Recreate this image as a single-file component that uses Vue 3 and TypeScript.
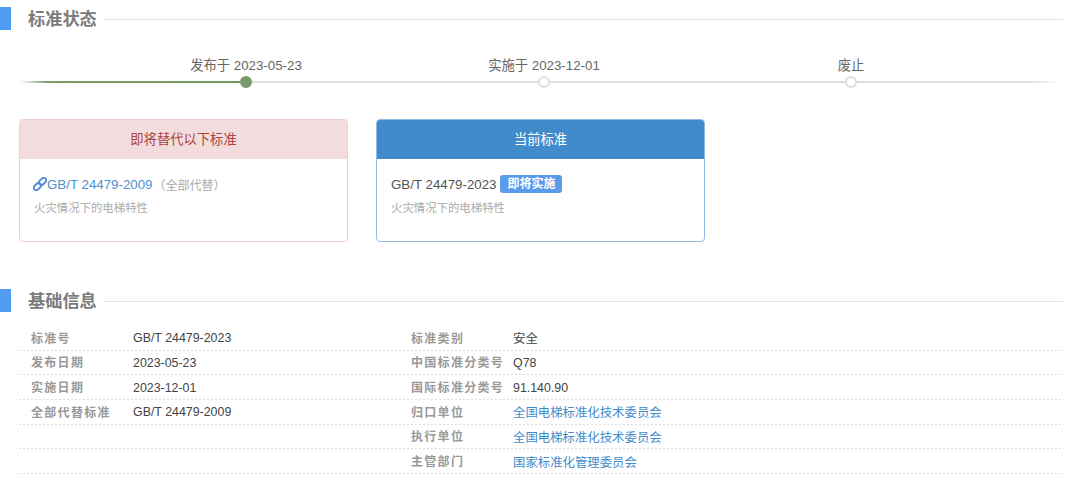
<script setup lang="ts">
interface Row { label: string; value: string; link?: boolean }
const leftRows: Row[] = [
  { label: '标准号', value: 'GB/T 24479-2023' },
  { label: '发布日期', value: '2023-05-23' },
  { label: '实施日期', value: '2023-12-01' },
  { label: '全部代替标准', value: 'GB/T 24479-2009' },
  { label: '', value: '' },
  { label: '', value: '' },
]
const rightRows: Row[] = [
  { label: '标准类别', value: '安全' },
  { label: '中国标准分类号', value: 'Q78' },
  { label: '国际标准分类号', value: '91.140.90' },
  { label: '归口单位', value: '全国电梯标准化技术委员会', link: true },
  { label: '执行单位', value: '全国电梯标准化技术委员会', link: true },
  { label: '主管部门', value: '国家标准化管理委员会', link: true },
]
</script>

<template>
  <div class="page">
    <section class="status">
      <header class="head">
        <i class="mark"></i>
        <h2>标准状态</h2>
        <span class="rule"></span>
      </header>

      <div class="timeline">
        <div class="labels">
          <span class="tl a">发布于 2023-05-23</span>
          <span class="tl b">实施于 2023-12-01</span>
          <span class="tl c">废止</span>
        </div>
        <div class="track">
          <span class="seg green s1"></span>
          <span class="dot on"></span>
          <span class="seg s2"></span>
          <span class="dot"></span>
          <span class="seg s3"></span>
          <span class="dot"></span>
          <span class="seg s4"></span>
        </div>
      </div>

      <div class="cards">
        <article class="card red">
          <div class="card-title">即将替代以下标准</div>
          <div class="card-body">
            <div class="line">
              <svg class="chain" viewBox="0 0 14 14" width="14" height="14" fill="none" stroke="#4f8fd0" stroke-width="1.9">
                <rect x="5.6" y="1.9" width="8" height="5" rx="2.5" transform="rotate(-45 9.6 4.4)" />
                <rect x="0.4" y="7.1" width="8" height="5" rx="2.5" transform="rotate(-45 4.4 9.6)" />
              </svg>
              <a class="std">GB/T 24479-2009</a>
              <span class="note">（全部代替）</span>
            </div>
            <p class="desc">火灾情况下的电梯特性</p>
          </div>
        </article>

        <article class="card blue">
          <div class="card-title">当前标准</div>
          <div class="card-body">
            <div class="line">
              <span class="cur">GB/T 24479-2023</span>
              <span class="badge">即将实施</span>
            </div>
            <p class="desc">火灾情况下的电梯特性</p>
          </div>
        </article>
      </div>
    </section>

    <section class="basic">
      <header class="head">
        <i class="mark"></i>
        <h2>基础信息</h2>
        <span class="rule"></span>
      </header>

      <div class="table">
        <div class="col left">
          <div v-for="(r, i) in leftRows" :key="i" class="row">
            <span class="k">{{ r.label }}</span>
            <span class="v">{{ r.value }}</span>
          </div>
        </div>
        <div class="col right">
          <div v-for="(r, i) in rightRows" :key="i" class="row">
            <span class="k">{{ r.label }}</span>
            <span class="v" :class="{ link: r.link }">{{ r.value }}</span>
          </div>
        </div>
      </div>
    </section>
  </div>
</template>

<style>
html, body { margin: 0; background: #fff; }
</style>

<style scoped>
.page {
  width: 1080px;
  height: 495px;
  overflow: hidden;
  box-sizing: border-box;
  padding-top: 7px;
  background: #fff;
  font-family: "Liberation Sans", "Noto Sans CJK SC", sans-serif;
  font-size: 13.3px;
  color: #555;
}
.head {
  display: flex;
  align-items: center;
  height: 23px;
  padding-right: 17px;
}
.mark { width: 11px; height: 23px; background: #4f9cf0; flex: none; }
.head h2 {
  margin: 2px 7px 0 17px;
  font-size: 17.2px;
  line-height: 23px;
  font-weight: 700;
  color: #7b7b7b;
}
.rule { flex: 1; height: 1px; background: #e4e4e4; margin-top: 1px; }

.timeline { margin: 27px 20px 0; }
.labels { display: flex; height: 18px; line-height: 18px; color: #666; }
.tl { width: 200px; flex: none; text-align: center; }
.tl.a { margin-left: 126px; }
.tl.b { margin-left: 98px; }
.tl.c { margin-left: 107px; }
.track { display: flex; align-items: center; height: 12px; margin-top: 1px; }
.seg {
  height: 2px;
  background: #dedede;
}
.seg.green { background: linear-gradient(90deg, #fff, #7a9f6d 12%, #6f9862); }
.s1 { width: 220px; }
.s2 { width: 287px; }
.s3 { width: 296px; }
.s4 { width: 203px; background: linear-gradient(90deg, #dedede 85%, #fff); }
.dot {
  width: 12px;
  height: 12px;
  box-sizing: border-box;
  border: 2px solid #dedede;
  border-radius: 50%;
  background: #fff;
  flex: none;
}
.dot.on { background: #76996a; border-color: #76996a; }

.cards {
  display: flex;
  gap: 28px;
  margin: 31px 0 0 19px;
}
.card {
  width: 329px;
  height: 123px;
  box-sizing: border-box;
  border: 1px solid;
  border-radius: 4px;
  overflow: hidden;
}
.card.red { border-color: #eecdd3; }
.card.blue { border-color: #8fbce6; }
.card-title {
  height: 39px;
  line-height: 39px;
  text-align: center;
}
.red .card-title { background: #f2dcde; color: #a94442; }
.blue .card-title { background: #428bca; color: #fff; }
.card-body { padding: 16px 14px 0; }
.line { display: flex; align-items: center; height: 18px; }
.chain { flex: none; margin-left: -1px; }
.std { color: #4f8fd0; }
.note { color: #aaa; font-size: 12px; margin-left: 1px; }
.cur { color: #555; }
.badge {
  margin-left: 4px;
  padding: 0 7px;
  height: 18px;
  line-height: 18px;
  border-radius: 3px;
  background: #5a9bec;
  color: #fff;
  font-size: 12px;
  font-weight: 700;
}
.desc {
  margin: 6px 0 0;
  font-size: 11.4px;
  line-height: 18px;
  color: #aaa;
}

.basic { margin-top: 47px; }
.table {
  display: flex;
  margin: 14px 17px 0 19px;
}
.col.left { width: 380px; flex: none; }
.col.right { flex: 1; }
.row {
  display: flex;
  align-items: center;
  box-sizing: border-box;
  height: 24.67px;
  background: linear-gradient(90deg, #dcdcdc 50%, transparent 0) left bottom / 4px 1px repeat-x;
  font-size: 12.4px;
  color: #444;
}
.k {
  width: 114px;
  padding-left: 12px;
  box-sizing: border-box;
  flex: none;
  margin-top: -2px;
  font-size: 12px;
  font-weight: 700;
  letter-spacing: 1.3px;
  color: #999;
  white-space: nowrap;
}
.v.link { color: #428bca; }
</style>
